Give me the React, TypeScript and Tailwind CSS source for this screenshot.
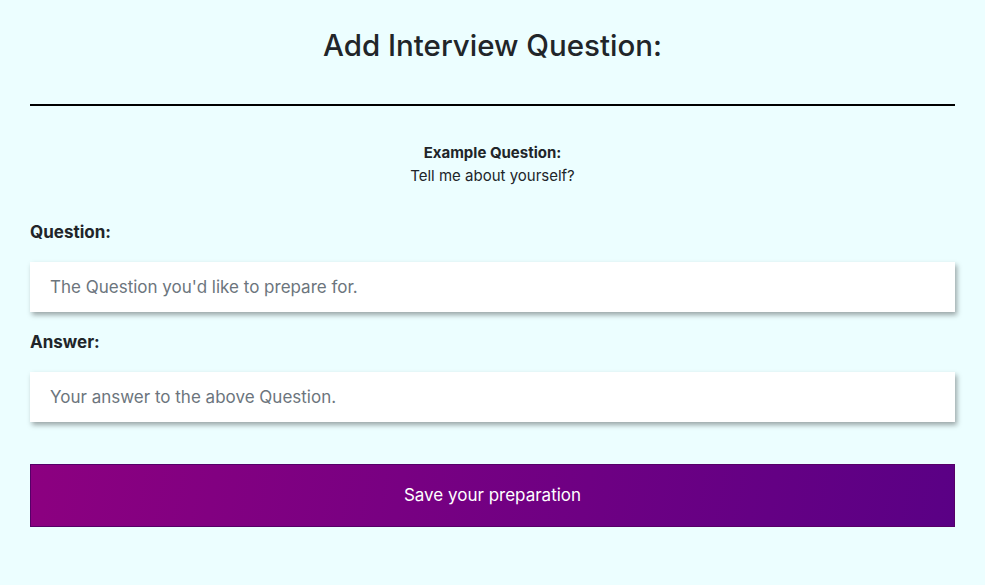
export default function App() {
  return (
    <div className="min-h-screen bg-[#ecfeff] px-[30px] pt-[28px] text-[#212529] font-['Inter','Liberation_Sans',sans-serif]">
      {/* Header */}
      <h3 className="text-center text-[29.5px] font-medium leading-[34px]">Add Interview Question:</h3>
      <hr className="mt-[42px] border-0 border-t-2 border-black" />

      {/* Example */}
      <div className="mt-[36px] text-center text-[15px] leading-[21px]">
        <p className="font-bold">Example Question:</p>
        <p className="mt-[2px]">Tell me about yourself?</p>
      </div>

      {/* Form */}
      <form className="mt-[34px] flex flex-col" onSubmit={(e) => e.preventDefault()}>
        <label className="text-[17px] font-bold leading-[24px]">Question:</label>
        <input
          type="text"
          placeholder="The Question you'd like to prepare for."
          className="mt-[18px] h-[50px] w-full bg-white px-[20px] text-[17px] outline-none shadow-[2px_3px_5px_rgba(0,0,0,0.35)] placeholder:text-[#6c757d]"
        />
        <label className="mt-[18px] text-[17px] font-bold leading-[24px]">Answer:</label>
        <input
          type="text"
          placeholder="Your answer to the above Question."
          className="mt-[18px] h-[50px] w-full bg-white px-[20px] text-[17px] outline-none shadow-[2px_3px_5px_rgba(0,0,0,0.35)] placeholder:text-[#6c757d]"
        />
        <button
          type="submit"
          className="mt-[42px] h-[63px] w-full border border-[#560068] bg-[linear-gradient(100deg,#8c0080,#5a0085)] text-[17px] text-white"
        >
          Save your preparation
        </button>
      </form>
    </div>
  );
}
